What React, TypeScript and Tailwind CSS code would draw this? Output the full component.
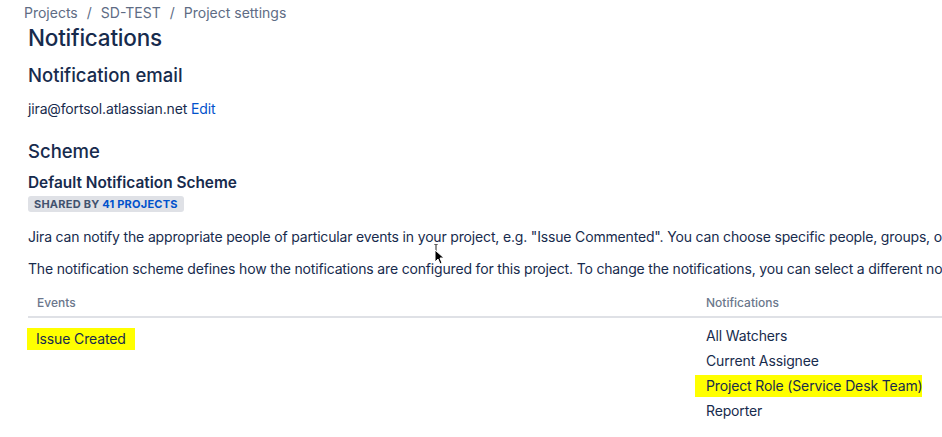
export default function App() {
  return (
    <div
      className="w-[942px] h-[437px] overflow-hidden bg-white text-[#172b4d]"
      style={{ fontFamily: "Inter, 'Noto Sans', sans-serif" }}
    >
      <div className="pl-[28px] pt-[4px] relative">
        {/* breadcrumbs */}
        <div className="flex items-center gap-[9px] -ml-[4px] text-[14px] leading-[18px] text-[#5e6c84]">
          <span>Projects</span>
          <span>/</span>
          <span>SD-TEST</span>
          <span>/</span>
          <span>Project settings</span>
        </div>

        <h1 className="text-[22.5px] leading-[28px] font-medium tracking-[-0.01em] mt-[2px]">Notifications</h1>

        <h2 className="text-[18.5px] leading-[24px] font-medium mt-[11px]">Notification email</h2>
        <p className="text-[14px] leading-[20px] tracking-[-0.01em] mt-[12px]">
          jira@fortsol.atlassian.net <span className="text-[#0052cc]">Edit</span>
        </p>

        <h2 className="text-[18.5px] leading-[24px] font-medium mt-[20px]">Scheme</h2>
        <h3 className="text-[15.4px] leading-[20px] font-semibold mt-[10px]">Default Notification Scheme</h3>
        <div className="mt-[3px] flex">
          <span className="bg-[#dfe1e6] rounded-[3px] px-[6px] text-[11px] leading-[16px] font-bold tracking-[0.02em] text-[#42526e]">
            SHARED BY <span className="text-[#0052cc]">41 PROJECTS</span>
          </span>
        </div>

        <p className="text-[14px] leading-[20px] tracking-[-0.012em] whitespace-nowrap mt-[15px]">
          Jira can notify the appropriate people of particular events in your project, e.g. "Issue Commented". You can choose specific people, groups, or roles to receive notifications.
        </p>
        <p className="text-[14px] leading-[20px] tracking-[-0.012em] whitespace-nowrap mt-[12px]">
          The notification scheme defines how the notifications are configured for this project. To change the notifications, you can select a different notification scheme.
        </p>

        {/* table */}
        <div className="mt-[16px] w-[1000px]">
          <div className="flex border-b-2 border-[#dfe1e6] text-[12px] leading-[16px] font-medium text-[#6b778c] pb-[5px]">
            <div className="w-[670px] px-[9px]">Events</div>
            <div className="px-[8px]">Notifications</div>
          </div>
          <div className="flex text-[14px] leading-[20px] tracking-[-0.01em]">
            <div className="w-[670px] pt-[10px]">
              <span className="inline-block bg-[#ffff00] px-[9px] py-[1px] -ml-[1px]">Issue Created</span>
            </div>
            <div className="pt-[8px] flex flex-col items-start gap-[5px]">
              <span className="px-[8px]">All Watchers</span>
              <span className="px-[8px]">Current Assignee</span>
              <span className="bg-[#ffff00] whitespace-nowrap -ml-[3px] pl-[11px] py-[1px] -my-[1px] w-[227px]">Project Role (Service Desk Team)</span>
              <span className="px-[8px]">Reporter</span>
            </div>
          </div>
        </div>

        {/* mouse cursor */}
        <svg className="absolute left-[431px] top-[244px]" width="14" height="20" viewBox="0 0 14 20">
          <path d="M5 0 L5 3 M3 0 L7 0 M5 3 L5 11" stroke="#222" strokeWidth="1" fill="none" />
          <path d="M4 6 L4 18 L7 15 L9 20 L11 19 L9 14 L13 14 Z" fill="#000" stroke="#fff" strokeWidth="1" />
        </svg>
      </div>
    </div>
  );
}
